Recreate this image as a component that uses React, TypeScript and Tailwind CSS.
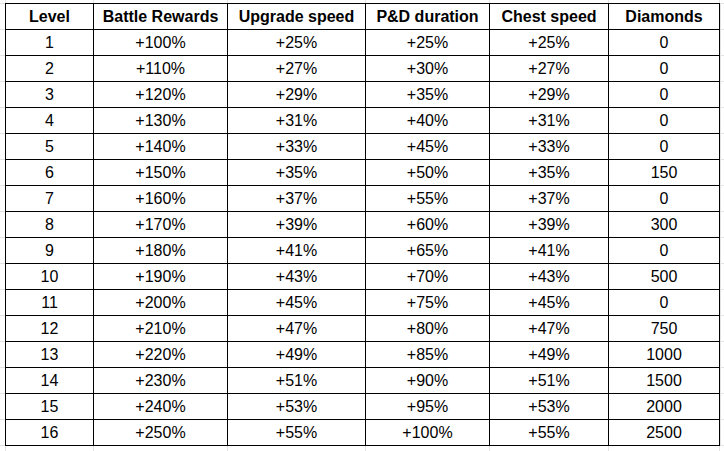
const columns = ["Level", "Battle Rewards", "Upgrade speed", "P&D duration", "Chest speed", "Diamonds"];

const rows = [
  ["1", "+100%", "+25%", "+25%", "+25%", "0"],
  ["2", "+110%", "+27%", "+30%", "+27%", "0"],
  ["3", "+120%", "+29%", "+35%", "+29%", "0"],
  ["4", "+130%", "+31%", "+40%", "+31%", "0"],
  ["5", "+140%", "+33%", "+45%", "+33%", "0"],
  ["6", "+150%", "+35%", "+50%", "+35%", "150"],
  ["7", "+160%", "+37%", "+55%", "+37%", "0"],
  ["8", "+170%", "+39%", "+60%", "+39%", "300"],
  ["9", "+180%", "+41%", "+65%", "+41%", "0"],
  ["10", "+190%", "+43%", "+70%", "+43%", "500"],
  ["11", "+200%", "+45%", "+75%", "+45%", "0"],
  ["12", "+210%", "+47%", "+80%", "+47%", "750"],
  ["13", "+220%", "+49%", "+85%", "+49%", "1000"],
  ["14", "+230%", "+51%", "+90%", "+51%", "1500"],
  ["15", "+240%", "+53%", "+95%", "+53%", "2000"],
  ["16", "+250%", "+55%", "+100%", "+55%", "2500"],
];

// widths measured from border to border
const cellW = ["w-[88px]", "w-[134px]", "w-[138px]", "w-[124px]", "w-[119px]", "w-[112px] border-r"];
const stripW = ["w-[88px]", "w-[134px]", "w-[138px]", "w-[124px]", "w-[119px]", "w-[111px]"];

const GridStrip = ({ h }: { h: string }) => (
  <div className={`flex ${h}`}>
    <div className="w-[5px] shrink-0" />
    {stripW.map((w, i) => (
      <div key={i} className={`${w} shrink-0 border-l border-[#e2e3e3]`} />
    ))}
    <div className="flex-1 border-l border-[#e2e3e3]" />
  </div>
);

const SideStrip = ({ w }: { w: string }) => (
  <div className={`${w} flex flex-col border-b border-[#e2e3e3]`}>
    {Array.from({ length: 17 }).map((_, i) => (
      <div key={i} className="h-[26px] border-t border-[#e2e3e3]" />
    ))}
  </div>
);

const Row = ({ cells, head }: { cells: string[]; head?: boolean }) => (
  <div className="flex h-[26px] border-t border-black">
    {cells.map((c, i) => (
      <div
        key={i}
        className={`${cellW[i]} shrink-0 border-l border-black flex items-center justify-center ${
          head ? "font-bold" : ""
        }`}
      >
        {c}
      </div>
    ))}
  </div>
);

export default function App() {
  return (
    <div
      className="w-[724px] h-[451px] overflow-hidden bg-white text-black text-[16px] leading-none"
      style={{ fontFamily: '"Liberation Sans", Arial, sans-serif' }}
    >
      <GridStrip h="h-[3px]" />
      <div className="flex">
        <SideStrip w="w-[5px]" />
        <div className="flex flex-col border-b border-black">
          <Row cells={columns} head />
          {rows.map((r) => (
            <Row key={r[0]} cells={r} />
          ))}
        </div>
        <div className="flex-1 border-l border-[#e2e3e3]">
          <SideStrip w="w-full" />
        </div>
      </div>
      <GridStrip h="h-[6px]" />
    </div>
  );
}
